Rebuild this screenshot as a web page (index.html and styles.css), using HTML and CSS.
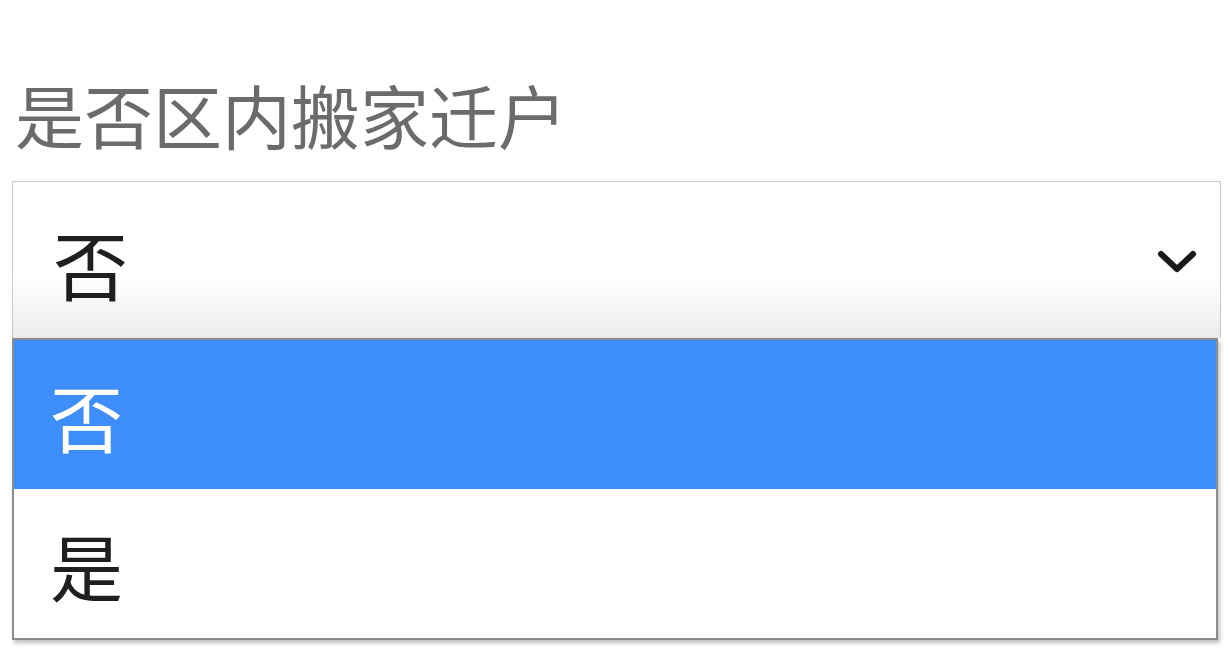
FILE: index.html
```html
<!DOCTYPE html>
<html lang="zh-CN">
<head>
<meta charset="utf-8">
<title>是否区内搬家迁户</title>
<link rel="stylesheet" href="styles.css">
</head>
<body>
<div class="field">
  <div class="label">是否区内搬家迁户</div>
  <div class="select-wrap">
    <div class="select">
      <span class="value">否</span>
      <svg class="chevron" viewBox="0 0 40 26" width="40" height="26" aria-hidden="true">
        <path d="M4 5 L20 20 L36 5" fill="none" stroke="#1a1a1a" stroke-width="6" stroke-linecap="round" stroke-linejoin="round"/>
      </svg>
    </div>
    <ul class="options">
      <li class="option selected">否</li>
      <li class="option">是</li>
    </ul>
  </div>
</div>
</body>
</html>
```
FILE: styles.css
```css
html, body {
  margin: 0;
  padding: 0;
  background: #ffffff;
}
body {
  font-family: "Noto Sans CJK SC", "Noto Sans", sans-serif;
  width: 1229px;
  height: 650px;
  overflow: hidden;
}
.field {
  padding: 68px 8px 0 12px;
}
.label {
  font-size: 69px;
  line-height: 92px;
  color: #6b6b6b;
  padding-left: 3px;
  height: 100px;
  margin-bottom: 13px;
}
.select-wrap {
  position: relative;
}
.select {
  box-sizing: border-box;
  height: 157px;
  border: 1px solid #c8c8c8;
  border-bottom: none;
  background: linear-gradient(to bottom, #ffffff 0%, #ffffff 60%, #ebebeb 100%);
  display: flex;
  align-items: center;
  justify-content: space-between;
  padding: 0 23px 0 40px;
}
.value {
  font-size: 75px;
  line-height: 1;
  color: #1f1f1f;
  margin-top: 4px;
}
.chevron {
  display: block;
  margin-top: 4px;
}
.options {
  position: absolute;
  left: 0;
  top: 157px;
  width: 1206px;
  margin: 0;
  padding: 0;
  list-style: none;
  box-sizing: border-box;
  border: 2px solid #8c8c8c;
  background: #ffffff;
  box-shadow: 2px 3px 4px rgba(0,0,0,0.25);
}
.option {
  height: 149px;
  display: flex;
  align-items: center;
  padding-left: 36px;
  font-size: 73px;
  color: #1f1f1f;
}
.option.selected {
  background: #3d8ef8;
  color: #ffffff;
}
```
